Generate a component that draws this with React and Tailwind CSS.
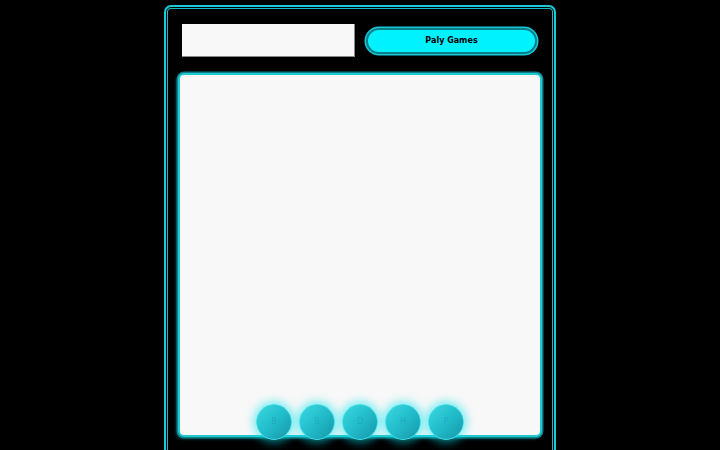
import React from "react";

const dots = ["B", "B", "D", "H", "P"];

function App() {
  return (
    <div className="w-[720px] h-[450px] bg-black overflow-hidden flex justify-center font-['DejaVu_Sans',sans-serif]">
      <div className="mt-[5px] w-[392px] h-[460px] shrink-0 rounded-[7px] border-2 border-[#1cc9d4] shadow-[inset_0_0_0_1px_#000,inset_0_0_0_2px_#18b9c4] px-[12px] pt-[17px]">
        <div className="flex items-center pl-[4px] pr-[5px] h-[33px]">
          <div className="w-[173px] h-[33px] bg-[#f8f8f8] border-b border-r border-[#8a8a8a]"></div>
          <button className="ml-[11px] w-[171px] h-[26px] rounded-full bg-[#00f2ff] border-2 border-[#0a7e8a] shadow-[0_0_0_1.5px_#16c9d6] text-[8px] font-bold text-black">
            Paly Games
          </button>
        </div>
        <div className="relative mt-[16px] w-[364px] h-[364px] rounded-[6px] bg-[#f8f8f8] border-2 border-[#20c8d2] shadow-[0_0_0_1.5px_#0f7f88,-2px_2px_3px_rgba(0,180,200,0.4)]">
          <div className="absolute left-0 right-0 bottom-[-5px] flex justify-center gap-[7px]">
            {dots.map((d, i) => (
              <div
                key={i}
                className="w-[36px] h-[36px] rounded-full bg-[linear-gradient(135deg,#3ad8e0_0%,#22bccb_50%,#1797a8_100%)] border border-[#45e2ea] shadow-[0_0_8px_3px_rgba(0,230,240,0.5)] flex items-center justify-center text-[8px] text-[#1a8fb3]/40"
              >
                {d}
              </div>
            ))}
          </div>
        </div>
      </div>
    </div>
  );
}

export default App;
